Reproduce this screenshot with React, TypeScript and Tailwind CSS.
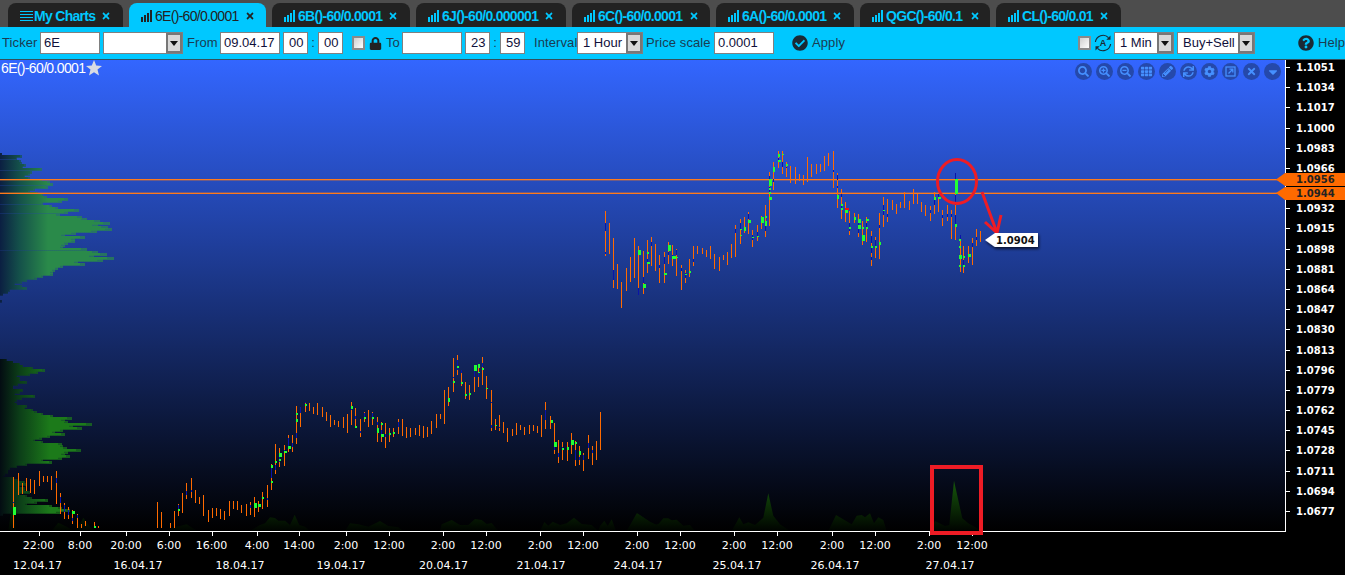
import React from "react";
import { FaCheckCircle, FaQuestionCircle, FaLock, FaSearch, FaSearchPlus, FaSearchMinus, FaTh, FaPencilAlt, FaSync, FaCog, FaTimes, FaCaretDown } from "react-icons/fa";

type B = [number, number, number];
type G = [number, number, number, number];
type Seg = { ox: number; oy: number; bars: B[]; blue: B[]; green: G[] };

const segs: Seg[] = [
  {
    ox: 0, oy: 355,
    bars: [[40,365,519],[55,353,420],[67,384,417],[79,369,408],[91,372,414],[103,375,417],[118,348,393],[130,363,381],[142,363,381],[154,363,405],[169,348,447],[181,414,477],[193,444,492],[205,456,492],[217,465,507],[232,477,519],[244,507,519],[256,498,513],[283,501,519],[295,513,519],[472,441,519],[484,471,519],[511,504,519],[523,468,519],[535,447,483],[547,414,474],[559,384,432],[574,369,429],[586,405,444],[598,426,447],[610,420,483],[625,465,501],[637,459,489],[649,459,483],[661,462,492],[673,468,495],[688,438,483],[700,438,462],[712,438,465],[724,450,474],[739,447,483],[751,441,480],[763,426,486],[775,438,471],[787,411,462],[802,390,456],[814,327,405],[826,267,357],[838,279,336],[853,270,333],[865,240,291],[877,240,291],[889,153,267]],
    blue: [[40,440,445],[169,370,385],[181,425,445],[193,450,470],[205,465,480],[217,490,498],[232,480,490],[535,450,462],[559,408,420],[574,405,412],[751,450,458],[814,340,370],[826,330,345],[838,305,320],[853,285,292],[865,250,280],[877,265,275],[802,430,435],[889,235,250]],
    green: [[38,456,8,24],[216,468,8,8],[282,513,6,6],[534,462,6,5],[762,444,8,16],[774,447,8,9],[786,426,6,6],[813,330,6,9],[813,378,6,6],[825,318,6,6],[837,294,9,12],[837,312,6,6],[852,288,9,6],[864,273,8,9],[888,192,7,9],[888,175,6,4]],
  },
  {
    ox: 270, oy: 350,
    bars: [[91,170,232],[106,155,186],[118,158,184],[130,170,192],[142,158,195],[157,170,200],[169,185,213],[181,195,231],[193,210,225],[205,212,232],[220,200,234],[232,192,249],[244,155,225],[256,173,235],[271,208,261],[283,185,216],[295,180,231],[307,185,225],[322,200,276],[334,215,276],[346,218,294],[358,233,276],[370,233,261],[385,207,252],[397,208,258],[409,230,264],[421,233,261],[436,233,255],[448,225,257],[460,227,264],[472,230,261],[484,212,252],[499,192,234],[511,192,207],[523,120,222],[535,112,168],[550,24,126],[562,16,74],[574,60,108],[586,96,148],[598,105,150],[613,45,126],[625,42,111],[637,20,105],[649,78,147],[664,120,243],[676,208,240],[688,195,243],[700,215,249],[712,235,276],[727,236,258],[739,219,255],[751,224,240],[763,230,255],[778,224,252],[790,224,244],[802,227,249],[814,194,261],[826,155,237],[841,197,237],[853,218,312],[865,270,339],[877,276,330],[892,276,333],[904,249,312],[916,272,348],[928,288,345],[940,309,363],[955,254,327],[967,288,345],[979,272,330],[991,185,300]],
    blue: [[91,170,190],[106,155,160],[244,175,180],[256,198,208],[271,244,250],[283,190,200],[307,190,200],[322,215,225],[334,240,260],[346,252,260],[385,215,230],[550,80,85],[562,30,60],[574,60,70],[613,60,80],[625,65,80],[637,40,50],[664,155,160],[664,225,235],[688,230,235],[826,180,210],[853,290,300],[865,310,320],[877,290,300],[916,300,330],[928,320,330],[940,315,330],[955,280,295],[967,300,310]],
    green: [[105,162,7,6],[243,168,7,8],[255,227,7,7],[282,200,6,7],[306,200,6,7],[321,233,7,15],[333,218,6,7],[333,252,9,8],[358,248,6,6],[369,245,6,6],[534,144,7,12],[549,93,6,6],[561,48,6,6],[573,96,6,6],[585,132,6,5],[597,129,6,6],[612,45,8,18],[624,42,7,12],[636,54,7,6],[624,66,5,4],[648,114,6,4],[675,225,6,4],[843,210,6,8],[852,276,9,14],[876,294,6,6],[891,291,6,10],[903,270,8,16],[915,275,5,7],[927,303,6,12]],
  },
  {
    ox: 600, oy: 140,
    bars: [[16,212,347],[28,249,342],[40,293,444],[52,372,447],[64,426,504],[79,384,453],[91,351,426],[103,294,414],[115,318,465],[130,333,462],[142,300,399],[154,291,378],[166,312,393],[178,345,429],[193,335,429],[205,306,372],[217,315,378],[229,327,408],[244,375,450],[256,390,429],[268,357,411],[280,318,378],[292,318,342],[307,324,342],[319,330,351],[331,318,357],[343,342,387],[358,351,393],[370,345,360],[382,336,375],[394,312,354],[406,255,351],[421,237,312],[433,231,279],[445,216,282],[457,270,321],[472,255,303],[484,228,267],[496,195,291],[508,96,258],[520,66,150],[535,33,84],[547,33,102],[559,66,111],[571,78,129],[586,81,132],[598,102,123],[610,105,135],[622,51,126],[634,72,111],[649,72,102],[661,72,96],[673,48,93],[685,39,78]],
    blue: [[16,250,272],[16,336,342],[40,390,420],[115,444,465],[130,410,430],[142,358,372],[154,306,318],[178,375,385],[193,350,372],[205,335,345],[217,345,355],[229,330,345],[244,385,393],[256,400,415],[280,358,365],[406,267,280],[421,250,270],[445,222,238],[457,285,300],[472,276,290],[496,258,272],[508,108,118],[508,140,155],[520,118,125],[535,55,65],[547,65,80],[559,80,85]],
    green: [[114,330,8,15],[128,432,8,12],[141,336,6,6],[141,366,8,5],[192,399,8,7],[204,316,10,18],[216,348,12,9],[228,350,6,5],[255,402,6,4],[267,393,6,7],[433,261,5,12],[444,240,10,8],[484,231,8,18],[496,228,5,6],[496,243,6,15],[519,81,7,14],[507,118,10,20],[507,143,6,6],[507,156,6,6],[507,171,8,9],[534,42,7,9],[534,60,8,6],[559,72,5,6],[547,42,4,4],[421,267,5,4],[421,285,5,4],[472,288,5,4],[457,291,5,4]],
  },
  {
    ox: 830, oy: 140,
    bars: [[10,33,144],[22,99,204],[34,147,237],[46,186,246],[58,213,285],[73,219,249],[85,222,291],[97,243,315],[109,231,306],[124,273,378],[136,291,354],[148,219,357],[160,171,261],[172,177,246],[187,180,210],[199,192,222]],
    blue: [[10,90,96],[22,105,120],[22,138,145],[34,162,170],[34,195,210],[46,205,215],[58,250,272],[85,250,280],[109,250,262],[124,288,310],[124,320,340],[124,350,360],[136,300,320],[148,255,265],[160,195,225],[172,222,230]],
    green: [[20,165,7,12],[33,192,6,5],[33,204,6,6],[46,210,8,8],[58,260,6,6],[72,231,7,9],[84,237,8,12],[84,255,9,12],[97,261,6,6],[96,285,10,18],[109,261,5,6],[109,237,8,6],[124,318,6,6],[136,318,5,6],[148,306,5,9],[160,210,5,4]],
  },
  {
    ox: 900, oy: 140,
    bars: [[0,186,204],[13,156,204],[28,183,210],[40,147,192],[52,162,192],[64,186,216],[76,195,228],[91,198,243],[103,156,222],[115,162,216],[127,210,258],[142,195,243],[154,210,298],[166,100,300],[180,285,397],[190,318,400],[205,318,370],[217,294,375],[229,267,318],[241,273,306]],
    blue: [[91,210,220],[103,180,195],[115,162,172],[127,225,235],[142,222,230],[154,222,230],[166,100,120],[166,165,195],[166,225,262],[180,285,300],[190,360,375],[217,310,322],[229,290,300]],
    green: [[102,171,7,8],[114,171,8,6],[165,118,10,44],[165,252,6,9],[177,297,5,6],[177,318,6,6],[177,345,8,12],[177,375,5,5],[189,348,6,6],[189,375,6,5],[204,342,8,10]],
  },
];

const upperProfile: [number, number][] = [[38,5],[45,65],[52,50],[60,62],[66,65],[72,78],[78,70],[85,127],[92,95],[98,90],[105,75],[112,90],[118,125],[124,150],[130,158],[137,145],[143,105],[150,90],[156,115],[162,130],[168,142],[175,203],[181,185],[187,130],[195,155],[201,175],[208,237],[214,205],[221,180],[227,245],[233,260],[239,300],[245,330],[251,295],[257,323],[263,335],[270,290],[276,227],[282,195],[289,255],[295,225],[301,225],[307,205],[313,195],[319,190],[325,260],[332,295],[338,320],[344,283],[351,342],[357,310],[363,235],[369,255],[375,190],[381,175],[387,165],[393,160],[399,160],[405,130],[411,110],[417,80],[423,65],[429,45],[435,65],[441,80],[447,30],[453,25],[459,8],[479,5]];
const lowerProfile: [number, number][] = [[12,20],[18,40],[24,60],[30,70],[36,100],[42,135],[48,115],[54,90],[60,50],[66,60],[72,60],[78,80],[84,55],[90,40],[96,40],[102,70],[108,60],[114,45],[120,105],[126,65],[132,50],[138,45],[144,50],[150,80],[156,75],[162,100],[168,110],[174,130],[180,160],[186,215],[192,195],[198,205],[204,275],[210,220],[216,245],[222,190],[228,165],[234,195],[240,150],[246,125],[252,105],[258,130],[264,185],[270,190],[276,200],[282,242],[288,205],[294,195],[300,210],[306,185],[312,130],[318,155],[324,80],[330,50],[336,30],[342,25],[348,25],[354,15],[360,10],[366,40],[372,55],[378,75],[384,80],[390,60],[396,75],[402,75],[408,90],[414,60],[420,80],[426,95],[432,145],[438,110],[444,80],[450,155],[456,185],[462,210],[468,180],[474,10]];

const vol = (ox: number, oy: number, s: string) =>
  s.split(" ").map((p) => { const [a, b] = p.split(",").map(Number); return `${(ox + a / 3).toFixed(1)},${(oy + b / 3).toFixed(1)}`; }).join(" ");
const volumes = [
  vol(0,355,"25,527 38,440 48,527"),
  vol(0,355,"155,527 175,503 200,515 220,527"),
  vol(0,355,"225,527 235,515 250,488 270,515 285,527"),
  vol(0,355,"500,527 530,515 560,508 590,527"),
  vol(260,490,"-30,123 0,105 15,100 30,82 45,84 55,92 75,92 90,105 104,74 118,105 135,110 150,123"),
  vol(260,490,"255,123 270,100 295,103 325,110 360,93 385,108 415,112 430,123"),
  vol(260,490,"540,123 545,103 575,90 600,105 625,105 645,87 665,90 680,102 695,99 715,123"),
  vol(260,490,"840,123 853,96 865,107 878,95 900,105 920,100 942,83 965,102 995,105 1015,123 1020,108 1033,92 1043,108 1055,88 1068,123"),
  vol(260,490,"1115,123 1132,70 1170,95 1190,105 1200,100 1210,123"),
  vol(620,485,"20,138 50,85 80,105 100,120 115,118 130,100 145,100 155,106 170,104 190,122 210,120 225,138"),
  vol(620,485,"335,138 358,97 370,118 385,112 405,120 430,98 445,25 460,92 480,118 510,138"),
  vol(620,485,"625,138 648,90 695,118 710,92 725,90 735,97 750,85 762,115 775,97 790,105 800,138"),
  vol(880,450,"150,243 165,213 195,228 208,225 222,92 247,205 265,220 300,240"),
];

const prices = ["1.1051","1.1034","1.1017","1.1000","1.0983","1.0966","","1.0932","1.0915","1.0898","1.0881","1.0864","1.0847","1.0830","1.0813","1.0796","1.0779","1.0762","1.0745","1.0728","1.0711","1.0694","1.0677"];
const times: [number, string][] = [[38.5,"22:00"],[80,"8:00"],[126,"20:00"],[169,"6:00"],[211.5,"16:00"],[257,"4:00"],[299,"14:00"],[346,"2:00"],[389,"12:00"],[443,"2:00"],[486,"12:00"],[540,"2:00"],[583,"12:00"],[637,"2:00"],[680,"12:00"],[734,"2:00"],[777,"12:00"],[832,"2:00"],[875,"12:00"],[929,"2:00"],[972,"12:00"]];
const dates: [number, string][] = [[37.5,"12.04.17"],[138,"16.04.17"],[240,"18.04.17"],[341,"19.04.17"],[443.5,"20.04.17"],[541,"21.04.17"],[638,"24.04.17"],[737,"25.04.17"],[835,"26.04.17"],[950,"27.04.17"]];

function BarsIcon({ dark }: { dark?: boolean }) {
  const c = dark ? "#222222" : "#00c8ff";
  return (
    <svg width="12" height="12" viewBox="0 0 12 12" className="shrink-0">
      <rect x="0" y="7" width="2" height="5" fill={c} />
      <rect x="3" y="5" width="2" height="7" fill={c} />
      <rect x="6" y="3" width="2" height="9" fill={c} />
      <rect x="9" y="0" width="2" height="12" fill={c} />
    </svg>
  );
}

function Tab({ label, width, active, close }: { label: string; width: string; active?: boolean; close: string }) {
  return (
    <div className={`${width} ${active ? "bg-[#00c8ff] text-[#222222]" : "bg-[#222222] text-[#00c8ff] font-bold"} h-6 pt-[2px] rounded-t-lg flex items-center pl-3 shrink-0 relative`}>
      <BarsIcon dark={active} />
      <span className="ml-[2px] text-[14px] tracking-[-0.7px] whitespace-nowrap">{label}</span>
      <FaTimes className={`absolute top-[8px] ${close} ${active ? "text-[#222222]" : "text-[#00c8ff]"} text-[10px]`} />
    </div>
  );
}

function Input({ value, className }: { value?: string; className: string }) {
  return <div className={`${className} h-[22px] bg-white border border-[#808080] flex items-center pl-[3px] text-[13px] text-[#10103a] shrink-0`}>{value}</div>;
}

function Select({ value, className }: { value?: string; className: string }) {
  return (
    <div className={`${className} h-[22px] bg-white border border-[#808080] flex items-center text-[13px] text-[#10103a] shrink-0 relative`}>
      <span className="pl-[5px] whitespace-nowrap">{value}</span>
      <div className="absolute right-0 top-0 bottom-0 w-4 bg-[#d8d8d8] border-2 border-[#777777] flex items-center justify-center">
        <svg width="8" height="5" viewBox="0 0 8 5"><path d="M0 0h8L4 5z" fill="#111" /></svg>
      </div>
    </div>
  );
}

function Check({ className }: { className: string }) {
  return <div className={`${className} w-[13px] h-[14px] border-2 border-[#8a8a8a] bg-gradient-to-br from-[#cfcfcf] to-[#ffffff] shrink-0`} />;
}

function Label({ children, className }: { children: React.ReactNode; className: string }) {
  return <span className={`${className} text-[13px] tracking-[0.1px] text-[#1a3c52] whitespace-nowrap shrink-0`}>{children}</span>;
}

function ChartBtn({ children }: { children: React.ReactNode }) {
  return <div className="w-[17px] h-[17px] rounded-full bg-[#2549ab] text-[#4590ff] flex items-center justify-center text-[11px]">{children}</div>;
}

export default function App() {
  const sans = { fontFamily: '"Liberation Sans", Arial, sans-serif' };
  const axisFont = '"DejaVu Sans", Verdana, sans-serif';
  return (
    <div className="w-[1345px] h-[575px] overflow-hidden bg-black flex flex-col" style={sans}>
      <div className="h-[27px] bg-[#4d4d4d] flex items-end pl-2 gap-[6px]">
        <div className="w-[115px] h-6 pt-[2px] rounded-t-lg bg-[#222222] text-[#00c8ff] font-bold flex items-center pl-3 relative shrink-0">
          <svg width="13" height="12" viewBox="0 0 13 12" className="shrink-0">
            <rect y="1" width="13" height="1" fill="#00c8ff" /><rect y="4" width="13" height="1" fill="#00c8ff" /><rect y="7" width="13" height="1" fill="#00c8ff" /><rect y="10" width="13" height="1" fill="#00c8ff" />
          </svg>
          <span className="ml-[1px] text-[14px] tracking-[-0.7px] whitespace-nowrap">My Charts</span>
          <FaTimes className="absolute top-[8px] left-[93px] text-[#00c8ff] text-[10px]" />
        </div>
        <Tab label="6E()-60/0.0001" width="w-[137px]" active close="left-[116px]" />
        <Tab label="6B()-60/0.0001" width="w-[138px]" close="left-[116px]" />
        <Tab label="6J()-60/0.000001" width="w-[150px]" close="left-[128px]" />
        <Tab label="6C()-60/0.0001" width="w-[138px]" close="left-[117px]" />
        <Tab label="6A()-60/0.0001" width="w-[138px]" close="left-[116px]" />
        <Tab label="QGC()-60/0.1" width="w-[130px]" close="left-[110px]" />
        <Tab label="CL()-60/0.01" width="w-[125px]" close="left-[103px]" />
      </div>

      <div className="h-[33px] bg-[#00c8ff] border-b border-[#33505f] flex items-center pl-[2px] shrink-0">
        <Label className="w-[38px]">Ticker</Label>
        <Input className="w-[60px]" value="6E" />
        <Select className="w-20 ml-[3px]" />
        <Label className="w-[30px] ml-1">From</Label>
        <Input className="w-[60px] ml-[3px]" value="09.04.17" />
        <Input className="w-[25px] ml-[3px] pl-[5px]" value="00" />
        <Label className="w-[10px] text-center">:</Label>
        <Input className="w-[25px] pl-[5px]" value="00" />
        <Check className="ml-[9px]" />
        <FaLock className="ml-1 text-[#222] text-[13px] shrink-0" />
        <Label className="w-4 ml-1">To</Label>
        <Input className="w-[60px]" />
        <Input className="w-[25px] ml-[3px] pl-[5px]" value="23" />
        <Label className="w-[10px] text-center">:</Label>
        <Input className="w-[25px] pl-[5px]" value="59" />
        <Label className="w-10 ml-[9px]">Interval</Label>
        <Select className="w-[66px] ml-[3px]" value="1 Hour" />
        <Label className="w-[68px] ml-[3px]">Price scale</Label>
        <Input className="w-[60px]" value="0.0001" />
        <FaCheckCircle className="ml-[18px] text-[#1a2a35] text-[16px] shrink-0" />
        <Label className="ml-1">Apply</Label>
        <Check className="ml-[233px]" />
        <svg width="18" height="18" viewBox="0 0 18 18" className="ml-[3px] shrink-0">
          <path d="M1.4 8A7.7 7.7 0 0 1 14.5 3.6M16.6 10A7.7 7.7 0 0 1 3.5 14.4" fill="none" stroke="#1a2a35" strokeWidth="1.2" />
          <path d="M16.5 1.6v4.2h-4.2zM1.5 16.4v-4.2h4.2z" fill="#1a2a35" />
          <text x="9" y="12.3" textAnchor="middle" fontSize="9" fontWeight="bold" fill="#1a2a35" fontFamily="Liberation Sans">A</text>
        </svg>
        <Select className="w-[60px] ml-[2px]" value="1 Min" />
        <Select className="w-[78px] ml-[3px]" value="Buy+Sell" />
        <FaQuestionCircle className="ml-[43px] text-[#1a2a35] text-[16px] shrink-0" />
        <Label className="ml-1">Help</Label>
      </div>

      <div className="relative h-[515px] shrink-0">
        <svg width="1345" height="515" viewBox="0 60 1345 515" className="block">
          <defs>
            <linearGradient id="bg" x1="0" y1="60" x2="0" y2="531" gradientUnits="userSpaceOnUse">
              <stop offset="0" stopColor="#3366ff" /><stop offset="1" stopColor="#000000" />
            </linearGradient>
            <linearGradient id="up" x1="0" y1="0" x2="48" y2="0" gradientUnits="userSpaceOnUse">
              <stop offset="0" stopColor="#0b1f42" /><stop offset="0.4" stopColor="#14504a" /><stop offset="1" stopColor="#2a8a4a" />
            </linearGradient>
            <linearGradient id="lo" x1="0" y1="0" x2="50" y2="0" gradientUnits="userSpaceOnUse">
              <stop offset="0" stopColor="#030c12" /><stop offset="0.4" stopColor="#0c3f18" /><stop offset="1" stopColor="#1c7a1a" />
            </linearGradient>
            <linearGradient id="vl" x1="0" y1="480" x2="0" y2="531" gradientUnits="userSpaceOnUse">
              <stop offset="0" stopColor="#175a0c" /><stop offset="1" stopColor="#000300" />
            </linearGradient>
            <filter id="sh" x="-10%" y="-20%" width="125%" height="150%"><feDropShadow dx="1" dy="2" stdDeviation="1.5" floodColor="#000" floodOpacity="0.7" /></filter>
          </defs>
          <rect x="0" y="60" width="1285" height="471" fill="url(#bg)" />

          <g shapeRendering="crispEdges">
            {upperProfile.map(([y, l], i) => (
              <g key={i}>
                <rect x="0" y={Math.round(140 + y / 3)} width={l / 3} height="3" fill="url(#up)" fillOpacity="0.7" />
                <rect x="0" y={Math.round(140 + y / 3)} width={(l / 3) * 0.94} height="2" fill="url(#up)" />
              </g>
            ))}
            {lowerProfile.map(([y, l], i) => (
              <g key={i}>
                <rect x="0" y={Math.round(355 + y / 3)} width={l / 3} height="3" fill="url(#lo)" fillOpacity="0.7" />
                <rect x="0" y={Math.round(355 + y / 3)} width={(l / 3) * 0.94} height="2" fill="url(#lo)" />
              </g>
            ))}
          </g>

          {volumes.map((p, i) => <polygon key={i} points={p} fill="url(#vl)" />)}

          <g shapeRendering="crispEdges">
            <rect x="0" y="179" width="1285" height="1" fill="#ff7a1a" />
            <rect x="0" y="180" width="1285" height="1" fill="#ff7a1a" fillOpacity="0.35" />
            <rect x="0" y="193" width="1285" height="1" fill="#ff7a1a" />
            <rect x="0" y="192" width="1285" height="1" fill="#ff7a1a" fillOpacity="0.35" />
            {segs.map((s, i) => (
              <g key={i}>
                {s.bars.map(([x, a, b], j) => <rect key={j} x={Math.round(s.ox + x / 3)} y={s.oy + a / 3} width="1" height={(b - a) / 3} fill="#ff6a00" />)}
                {s.blue.map(([x, a, b], j) => <rect key={j} x={Math.round(s.ox + x / 3)} y={s.oy + a / 3} width="1" height={(b - a) / 3} fill="#0a14a8" />)}
                {s.green.map(([x, y, w, h], j) => <rect key={j} x={Math.round(s.ox + x / 3)} y={s.oy + y / 3} width={Math.max(Math.round(w / 3), 2)} height={h / 3} fill="#22ff33" />)}
              </g>
            ))}
            <rect x="845" y="208" width="4" height="2" fill="#ee1111" />
          </g>

          <text x="1" y="73" fill="#ffffff" fontSize="14" letterSpacing="-0.65" fontFamily="Liberation Sans">6E()-60/0.0001</text>
          <polygon points="94,60 96.2,65.5 102,66 97.5,69.6 99,75.5 94,72.2 89,75.5 90.5,69.6 86,66 91.8,65.5" fill="#d8dbe3" />

          <rect x="1285" y="60" width="60" height="515" fill="#000" />
          <rect x="1285" y="60" width="1" height="472" fill="#ffffff" />
          <rect x="0" y="531" width="1286" height="1" fill="#ffffff" />

          {prices.map((p, i) => {
            const y = 67 + 20.18 * i;
            return (
              <g key={i}>
                <rect x="1286" y={Math.round(y)} width="4" height="1" fill="#fff" />
                <text x="1296" y={y + 4} fill="#ffffff" fontSize="10" fontWeight="bold" fontFamily={axisFont}>{p}</text>
              </g>
            );
          })}

          {times.map(([x, t], i) => (
            <g key={i}>
              <rect x={Math.round(x)} y="532" width="1" height="4" fill="#fff" />
              <text x={x} y="549" textAnchor="middle" fill="#ffffff" fontSize="11" fontFamily={axisFont}>{t}</text>
            </g>
          ))}
          {dates.map(([x, t], i) => (
            <text key={i} x={x} y="569" textAnchor="middle" fill="#ffffff" fontSize="11" fontFamily={axisFont}>{t}</text>
          ))}

          <polygon points="1276,179.5 1285,173 1345,173 1345,186 1285,186" fill="#ff6a00" />
          <polygon points="1276,193 1285,187 1345,187 1345,200 1285,200" fill="#ff6a00" />
          <text x="1296" y="183" fill="#222" fontSize="10" fontWeight="bold" fontFamily={axisFont}>1.0956</text>
          <text x="1296" y="197" fill="#222" fontSize="10" fontWeight="bold" fontFamily={axisFont}>1.0944</text>

          <ellipse cx="957" cy="181.5" rx="19.5" ry="22" fill="none" stroke="#ee1c25" strokeWidth="3" />
          <path d="M982 192L997 233M985 222L997 233L1001 215" fill="none" stroke="#ee1c25" strokeWidth="3" />
          <polygon points="985,240 995,233 1038,233 1038,247 995,247" fill="#ffffff" filter="url(#sh)" />
          <text x="996" y="244" fill="#111" fontSize="10" fontWeight="bold" fontFamily={axisFont}>1.0904</text>
          <rect x="932" y="467" width="49" height="66" fill="none" stroke="#ee1c25" strokeWidth="4" />
        </svg>

        <div className="absolute top-[3px] left-[1075px] flex gap-1">
          <ChartBtn><FaSearch /></ChartBtn>
          <ChartBtn><FaSearchPlus /></ChartBtn>
          <ChartBtn><FaSearchMinus /></ChartBtn>
          <ChartBtn><FaTh /></ChartBtn>
          <ChartBtn><FaPencilAlt /></ChartBtn>
          <ChartBtn><FaSync /></ChartBtn>
          <ChartBtn><FaCog /></ChartBtn>
          <ChartBtn>
            <svg width="11" height="11" viewBox="0 0 11 11"><rect x="1" y="1" width="9" height="9" fill="none" stroke="currentColor" strokeWidth="1.3" /><path d="M3.5 7.5L7.5 3.5M4.5 3.2h3.3v3.3" fill="none" stroke="currentColor" strokeWidth="1.3" /></svg>
          </ChartBtn>
          <ChartBtn><FaTimes /></ChartBtn>
          <ChartBtn><FaCaretDown className="text-[14px]" /></ChartBtn>
        </div>
      </div>
    </div>
  );
}
